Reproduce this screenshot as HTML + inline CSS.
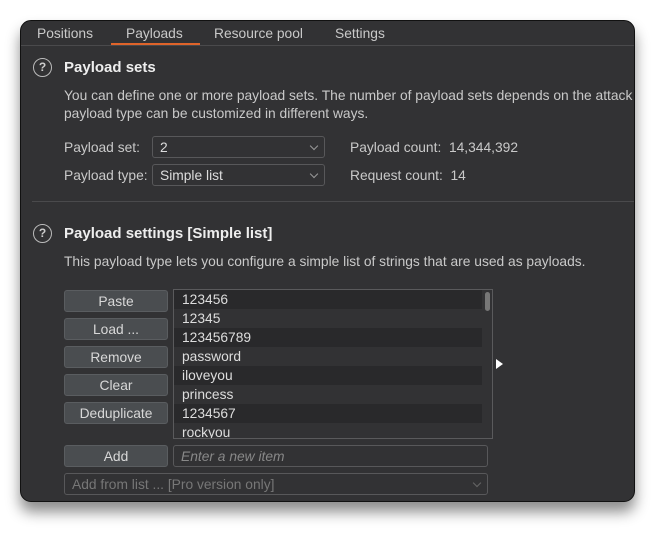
<!DOCTYPE html>
<html><head><style>
*{margin:0;padding:0;box-sizing:border-box}
body{width:655px;height:537px;background:#fff;position:relative;overflow:hidden;font-family:"Liberation Sans","DejaVu Sans",sans-serif;font-size:13.8px;color:#c9c9c9}
.win{position:absolute;left:20px;top:20px;width:615px;height:482px;background:#323234;border:1px solid #111;border-radius:11px;overflow:hidden;box-shadow:0 10px 14px rgba(0,0,0,.45)}
.a{position:absolute;white-space:nowrap;line-height:18px;margin-top:1px}
.tabline{position:absolute;left:0;right:0;top:24px;height:1px;background:#4a4a4c}
.ul{position:absolute;left:90px;top:22px;width:89px;height:2px;background:#e0642a}
.help{position:absolute;width:19px;height:19px;border:1.5px solid #bbb;border-radius:50%;color:#ccc;font-size:12px;font-weight:bold;text-align:center;line-height:16px}
.h{font-weight:bold;font-size:15px;color:#eee}
.sel{position:absolute;border:1px solid #58585a;border-radius:3px;background:#323234;height:22px;padding-left:7px;line-height:21px;color:#ddd}
.chev{position:absolute;right:7px;top:6px;width:6px;height:6px;border-right:1px solid #999;border-bottom:1px solid #999;transform:rotate(45deg)}
.btn{position:absolute;left:43px;width:104px;height:22px;background:#4a4d50;border:1px solid #5a5d60;border-radius:3px;text-align:center;line-height:21px;color:#d8d8d8}
.list{position:absolute;left:152px;top:268px;width:320px;height:150px;border:1px solid #5a5a5c;background:#323234;overflow:hidden}
.row{height:19px;line-height:20px;padding-left:8px;width:308px;color:#ddd}
.row.d{background:#29292b}
</style></head><body>
<div class="win">
<div class="a" style="left:16px;top:3px">Positions</div>
<div class="a" style="left:105px;top:3px">Payloads</div>
<div class="a" style="left:193px;top:3px">Resource pool</div>
<div class="a" style="left:314px;top:3px">Settings</div>
<div class="tabline"></div><div class="ul"></div>

<div class="help" style="left:12px;top:37px">?</div>
<div class="a h" style="left:43px;top:37px">Payload sets</div>
<div class="a" style="left:43px;top:65px">You can define one or more payload sets. The number of payload sets depends on the attack type</div>
<div class="a" style="left:43px;top:83px">payload type can be customized in different ways.</div>
<div class="a" style="left:43px;top:117px">Payload set:</div>
<div class="sel" style="left:131px;top:115px;width:173px">2<div class="chev"></div></div>
<div class="a" style="left:329px;top:117px">Payload count:&nbsp; 14,344,392</div>
<div class="a" style="left:43px;top:145px">Payload type:</div>
<div class="sel" style="left:131px;top:143px;width:173px">Simple list<div class="chev"></div></div>
<div class="a" style="left:329px;top:145px">Request count:&nbsp; 14</div>
<div style="position:absolute;left:11px;right:0;top:180px;height:1px;background:#4a4a4c"></div>

<div class="help" style="left:12px;top:203px">?</div>
<div class="a h" style="left:43px;top:203px">Payload settings [Simple list]</div>
<div class="a" style="left:43px;top:231px">This payload type lets you configure a simple list of strings that are used as payloads.</div>

<div class="btn" style="top:269px">Paste</div>
<div class="btn" style="top:297px">Load ...</div>
<div class="btn" style="top:325px">Remove</div>
<div class="btn" style="top:353px">Clear</div>
<div class="btn" style="top:381px">Deduplicate</div>
<div class="list">
<div class="row d">123456</div><div class="row">12345</div><div class="row d">123456789</div><div class="row">password</div><div class="row d">iloveyou</div><div class="row">princess</div><div class="row d">1234567</div><div class="row">rockyou</div>
<div style="position:absolute;left:311px;top:2px;width:5px;height:19px;background:#777;border-radius:3px"></div>
</div>
<div style="position:absolute;left:475px;top:338px;width:0;height:0;border-top:5px solid transparent;border-bottom:5px solid transparent;border-left:7px solid #fff"></div>
<div class="btn" style="top:424px">Add</div>
<div class="sel" style="left:152px;top:424px;width:315px;font-style:italic;color:#888">Enter a new item</div>
<div class="sel" style="left:43px;top:452px;width:424px;color:#777">Add from list ... [Pro version only]<div class="chev" style="border-color:#666"></div></div>
</div>
</body></html>
